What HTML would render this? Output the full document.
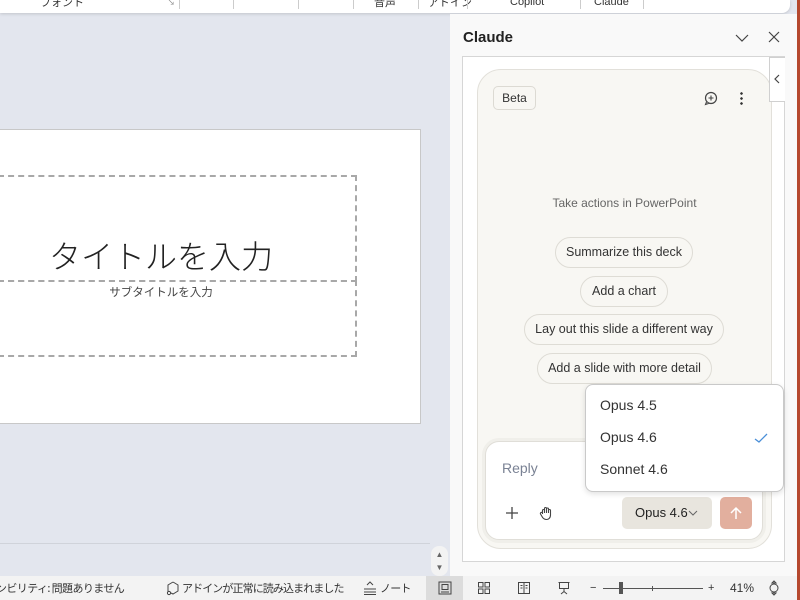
<!DOCTYPE html>
<html><head><meta charset="utf-8"><style>
*{box-sizing:border-box;margin:0;padding:0}
body{width:800px;height:600px;overflow:hidden;position:relative;background:#e3e6ee;font-family:"Liberation Sans","Noto Sans CJK JP",sans-serif;color:#222}
.a{position:absolute}
.jp{font-family:"Noto Sans CJK JP",sans-serif}
.chip{position:absolute;height:31px;border:1px solid #dedcd5;border-radius:16px;background:#f8f7f3;font-size:12.5px;color:#333;line-height:29px;text-align:center;white-space:nowrap}
</style></head><body>
<!-- ribbon -->
<div class="a" style="left:0;top:0;width:790px;height:13px;background:#fff;border-radius:0 0 8px 0;box-shadow:0 1px 3px rgba(0,0,0,.15);font-size:11px;color:#333;overflow:hidden">
<span class="a jp" style="left:40px;top:-6px">フォント</span>
<span class="a" style="left:167px;top:-3px;font-size:8px;color:#888">↘</span>
<div class="a" style="left:179px;top:0;width:1px;height:9px;background:#ccc"></div>
<div class="a" style="left:233px;top:0;width:1px;height:9px;background:#ccc"></div>
<div class="a" style="left:298px;top:0;width:1px;height:9px;background:#ccc"></div>
<div class="a" style="left:353px;top:0;width:1px;height:9px;background:#ccc"></div>
<span class="a jp" style="left:374px;top:-6px">音声</span>
<div class="a" style="left:418px;top:0;width:1px;height:9px;background:#ccc"></div>
<span class="a jp" style="left:428px;top:-6px">アドイン</span>
<div class="a" style="left:467px;top:0;width:1px;height:9px;background:#ccc"></div>
<span class="a" style="left:510px;top:-4px">Copilot</span>
<div class="a" style="left:580px;top:0;width:1px;height:9px;background:#ccc"></div>
<span class="a" style="left:594px;top:-4px">Claude</span>
<div class="a" style="left:643px;top:0;width:1px;height:9px;background:#ccc"></div>
</div>
<!-- slide -->
<div class="a" style="left:-1px;top:129px;width:422px;height:295px;background:#fff;border:1px solid #c8c8c8"></div>
<div class="a" style="left:-2px;top:175px;width:359px;height:107px;border:2px dashed #a8a8a8"></div>
<div class="a" style="left:-2px;top:280px;width:359px;height:77px;border:2px dashed #a8a8a8"></div>
<div class="a jp" style="left:0;top:231px;width:322px;text-align:center;font-size:32px;font-weight:300;color:#222;line-height:48px">タイトルを入力</div>
<div class="a jp" style="left:0;top:284px;width:322px;text-align:center;font-size:11.5px;color:#444">サブタイトルを入力</div>
<div class="a" style="left:0;top:543px;width:430px;height:1px;background:#d0d3da"></div>
<div class="a" style="left:431px;top:546px;width:17px;height:30px;background:#f3f3f3;border-radius:8px;font-size:8px;color:#666;text-align:center;line-height:13px;padding-top:2px">▲<br>▼</div>
<!-- pane -->
<div class="a" style="left:450px;top:14px;width:348px;height:562px;background:#f9f9f9"></div>
<div class="a" style="left:463px;top:29px;font-size:15px;font-weight:bold;color:#222">Claude</div>
<svg class="a" style="left:734px;top:31px" width="16" height="14"><path d="M2 4l6 6 6-6" fill="none" stroke="#444" stroke-width="1.2"/></svg>
<svg class="a" style="left:767px;top:30px" width="14" height="14"><path d="M2 2l10 10M12 2L2 12" stroke="#444" stroke-width="1.2"/></svg>
<div class="a" style="left:462px;top:56px;width:323px;height:506px;background:#fff;border:1px solid #d6d6d6"></div>
<div class="a" style="left:477px;top:69px;width:295px;height:480px;background:#f8f7f3;border:1px solid #e2e0da;border-radius:24px"></div>
<div class="a" style="left:769px;top:57px;width:16px;height:45px;background:#fff;border:1px solid #d0d0d0;border-right:none"></div>
<svg class="a" style="left:772px;top:73px" width="10" height="12"><path d="M7 2L3 6l4 4" fill="none" stroke="#444" stroke-width="1.2"/></svg>
<div class="a" style="left:493px;top:86px;width:43px;height:24px;border:1px solid #dcdad3;border-radius:5px;background:#f8f7f3;font-size:12px;line-height:22px;text-align:center;color:#333">Beta</div>
<svg class="a" style="left:703px;top:90px" width="16" height="16"><circle cx="8" cy="8" r="5.5" fill="none" stroke="#444" stroke-width="1.2"/><path d="M8 5.5v5M5.5 8h5" stroke="#444" stroke-width="1.1"/><path d="M3.5 12l-1 2.5 3-1" fill="#f8f7f3" stroke="#444" stroke-width="1.1"/></svg>
<div class="a" style="left:740px;top:91px;width:3px;height:14px;background:radial-gradient(circle,#333 1.2px,transparent 1.4px) 0 0/3px 5px"></div>
<div class="a" style="left:477px;top:196px;width:295px;text-align:center;font-size:12px;color:#666">Take actions in PowerPoint</div>
<div class="chip" style="left:555px;top:237px;width:138px">Summarize this deck</div>
<div class="chip" style="left:580px;top:276px;width:88px">Add a chart</div>
<div class="chip" style="left:524px;top:314px;width:200px">Lay out this slide a different way</div>
<div class="chip" style="left:537px;top:353px;width:175px">Add a slide with more detail</div>
<!-- input -->
<div class="a" style="left:485px;top:441px;width:278px;height:99px;background:#fff;border:1px solid #e0ded8;border-radius:14px;box-shadow:0 0 0 3px #f0efea"></div>
<div class="a" style="left:502px;top:460px;font-size:14px;color:#7a8294">Reply</div>
<svg class="a" style="left:504px;top:505px" width="16" height="16"><path d="M8 2v12M2 8h12" stroke="#444" stroke-width="1.3"/></svg>
<svg class="a" style="left:538px;top:505px" width="16" height="16"><path d="M4.5 9V5.5a1 1 0 0 1 2 0V8M6.5 8V3.5a1 1 0 0 1 2 0V8M8.5 8V4a1 1 0 0 1 2 0v4M10.5 8V5.5a1 1 0 0 1 2 0V10c0 3-2 4.5-4 4.5S5 13.5 4 11.5L2.5 9a1 1 0 0 1 2-1" fill="none" stroke="#444" stroke-width="1.1" stroke-linejoin="round"/></svg>
<div class="a" style="left:622px;top:497px;width:90px;height:32px;background:#e8e5de;border-radius:5px;font-size:13px;line-height:32px;padding-left:13px;color:#222">Opus 4.6</div>
<svg class="a" style="left:688px;top:510px" width="10" height="6"><path d="M1 1l4 4 4-4" fill="none" stroke="#666" stroke-width="1"/></svg>
<div class="a" style="left:720px;top:497px;width:32px;height:32px;background:#e2af9e;border-radius:5px"></div>
<svg class="a" style="left:728px;top:505px" width="16" height="16"><path d="M8 14V3M3 8l5-5 5 5" fill="none" stroke="#fff" stroke-width="1.5"/></svg>
<!-- dropdown -->
<div class="a" style="left:585px;top:384px;width:199px;height:108px;background:#fff;border:1px solid #c9c9c9;border-radius:8px;box-shadow:0 2px 6px rgba(0,0,0,.12);font-size:14px;color:#333">
<div class="a" style="left:14px;top:12px">Opus 4.5</div>
<div class="a" style="left:14px;top:44px">Opus 4.6</div>
<div class="a" style="left:14px;top:76px">Sonnet 4.6</div>
<svg class="a" style="left:168px;top:47px" width="14" height="12"><path d="M1 7l4 3 8-8" fill="none" stroke="#4a8fd8" stroke-width="1.3"/></svg>
</div>
<!-- status bar -->
<div class="a" style="left:0;top:576px;width:800px;height:24px;background:#f3f3f3;font-size:11px;color:#333;line-height:24px;white-space:nowrap">
<span class="a jp" style="left:-4px;top:0;letter-spacing:-0.6px">ンビリティ: 問題ありません</span>
<svg class="a" style="left:166px;top:5px" width="14" height="15"><path d="M7 1l5 3v6l-5 3-2-1M2 11V4l5-3" fill="none" stroke="#444" stroke-width="1"/><circle cx="3" cy="12" r="1.6" fill="none" stroke="#444"/></svg>
<span class="a jp" style="left:182px;top:0;letter-spacing:-0.9px">アドインが正常に読み込まれました</span>
<svg class="a" style="left:362px;top:5px" width="16" height="14"><path d="M5 4l3-3 3 3M2 8h12M2 11h12M2 13.5h12" fill="none" stroke="#444" stroke-width="1"/></svg>
<span class="a jp" style="left:380px;top:0;letter-spacing:-0.8px">ノート</span>
<div class="a" style="left:426px;top:0;width:37px;height:24px;background:#dcdcdc"></div>
<svg class="a" style="left:438px;top:5px" width="14" height="14"><rect x="1" y="1" width="12" height="12" fill="none" stroke="#444"/><rect x="4" y="3.5" width="6" height="5" fill="none" stroke="#444"/><path d="M3 11h8" stroke="#444"/></svg>
<svg class="a" style="left:477px;top:5px" width="14" height="14"><rect x="1.5" y="1.5" width="4.5" height="4.5" fill="none" stroke="#444"/><rect x="8" y="1.5" width="4.5" height="4.5" fill="none" stroke="#444"/><rect x="1.5" y="8" width="4.5" height="4.5" fill="none" stroke="#444"/><rect x="8" y="8" width="4.5" height="4.5" fill="none" stroke="#444"/></svg>
<svg class="a" style="left:517px;top:5px" width="14" height="14"><rect x="1.5" y="1.5" width="11" height="11" fill="none" stroke="#444"/><path d="M7 1.5v11M3.5 4.5h2M3.5 7h2M8.5 4.5h2M8.5 7h2" stroke="#444"/></svg>
<svg class="a" style="left:557px;top:5px" width="14" height="14"><path d="M1.5 1.5h11M2.5 1.5v6h9v-6M7 7.5v3M4 13l3-2.5 3 2.5" fill="none" stroke="#444"/></svg>
<span class="a" style="left:590px;top:0">−</span>
<div class="a" style="left:603px;top:12px;width:100px;height:1px;background:#555"></div>
<div class="a" style="left:652px;top:10px;width:1px;height:5px;background:#555"></div>
<div class="a" style="left:619px;top:6px;width:4px;height:12px;background:#555"></div>
<span class="a" style="left:708px;top:0">+</span>
<span class="a" style="left:730px;top:0;font-size:12px">41%</span>
<svg class="a" style="left:766px;top:4px" width="16" height="16"><path d="M8 1l2 2H6zM8 15l2-2H6zM4 8a4 4 0 0 1 8 0a4 4 0 0 1-8 0" fill="none" stroke="#444"/></svg>
</div>
<div class="a" style="left:797px;top:0;width:3px;height:600px;background:#b5482e"></div>
</body></html>
